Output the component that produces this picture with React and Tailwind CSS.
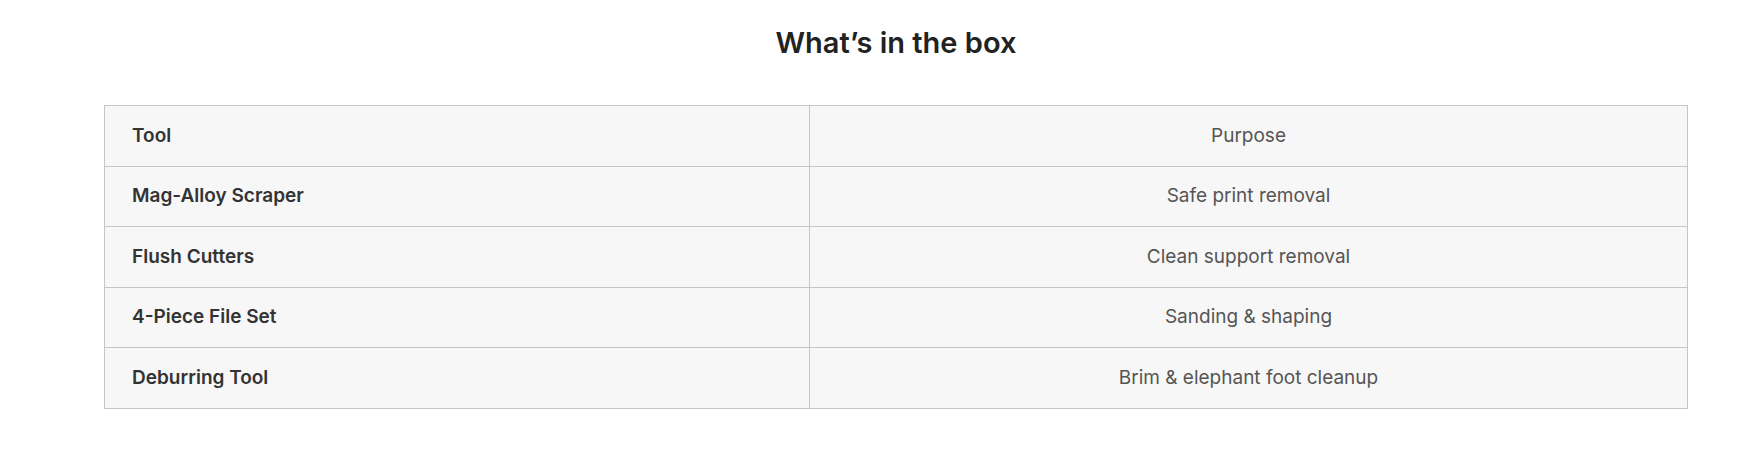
const rows = [
  ['Mag-Alloy Scraper', 'Safe print removal'],
  ['Flush Cutters', 'Clean support removal'],
  ['4-Piece File Set', 'Sanding & shaping'],
  ['Deburring Tool', 'Brim & elephant foot cleanup'],
];

export default function App() {
  return (
    <div className="min-h-[450px] bg-white font-['Inter',sans-serif]">
      <div className="ml-[104px] w-[1584px] pt-[25px]">
        <h2 className="text-center text-[29px] leading-[36px] font-semibold text-[#222]">
          What’s in the box
        </h2>

        <table className="mt-[44px] w-full table-fixed border-collapse bg-[#f7f7f7] text-[19px]">
          <thead>
            <tr className="h-[60.5px]">
              <th className="w-[705px] border border-[#c6c6c6] pl-[27px] text-left font-semibold text-[#333]">
                Tool
              </th>
              <th className="border border-[#c6c6c6] text-center font-normal text-[#555]">
                Purpose
              </th>
            </tr>
          </thead>
          <tbody>
            {rows.map(([tool, purpose]) => (
              <tr key={tool} className="h-[60.5px]">
                <td className="border border-[#c6c6c6] pl-[27px] font-semibold text-[#333]">{tool}</td>
                <td className="border border-[#c6c6c6] text-center text-[#555]">{purpose}</td>
              </tr>
            ))}
          </tbody>
        </table>
      </div>
    </div>
  );
}
